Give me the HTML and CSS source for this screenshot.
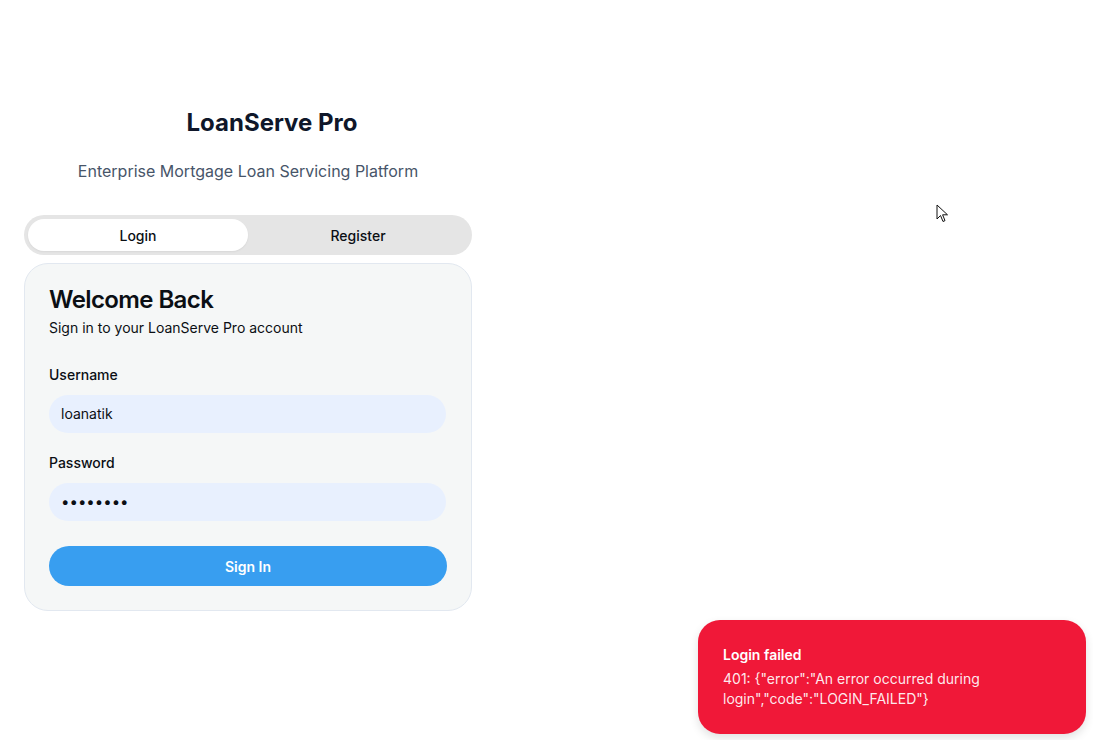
FILE: index.html
```html
<!DOCTYPE html>
<html lang="en">
<head>
<meta charset="utf-8">
<title>LoanServe Pro</title>
<link rel="stylesheet" href="styles.css">
</head>
<body>
<main class="page">
  <header class="brand">
    <h1 class="brand-title">LoanServe Pro</h1>
    <p class="brand-sub">Enterprise Mortgage Loan Servicing Platform</p>
  </header>
  <div class="tabs">
    <button class="tab tab-active">Login</button>
    <button class="tab">Register</button>
  </div>
  <section class="card">
    <h2 class="card-title">Welcome Back</h2>
    <p class="card-sub">Sign in to your LoanServe Pro account</p>
    <div class="field">
      <label class="label">Username</label>
      <div class="input">loanatik</div>
    </div>
    <div class="field">
      <label class="label">Password</label>
      <div class="input input-pass">&#8226;&#8226;&#8226;&#8226;&#8226;&#8226;&#8226;&#8226;</div>
    </div>
    <button class="submit">Sign In</button>
  </section>
</main>
<div class="toast">
  <div class="toast-title">Login failed</div>
  <div class="toast-body">401: {"error":"An error occurred during login","code":"LOGIN_FAILED"}</div>
</div>
<svg class="cursor" width="14" height="20" viewBox="0 0 14 20">
  <path d="M1 1 L1 15 L4.5 11.5 L7 17.5 L9 16.6 L6.6 10.8 L11.5 10.8 Z" fill="#fff" stroke="#111" stroke-width="1" stroke-linejoin="miter"/>
</svg>
</body>
</html>
```
FILE: styles.css
```css
* { box-sizing: border-box; }
html, body { margin: 0; padding: 0; background: #ffffff; }
body {
  font-family: Inter, "Noto Sans", sans-serif;
  color: #0b0f14;
  width: 1093px;
  height: 740px;
  overflow: hidden;
  position: relative;
}
.page {
  width: 448px;
  margin-left: 24px;
  display: flex;
  flex-direction: column;
}
.brand {
  padding-top: 107px;
  text-align: center;
}
.brand-title {
  margin: 0;
  padding-left: 48px;
  font-size: 24px;
  line-height: 32px;
  font-weight: 700;
  color: #0f172a;
}
.brand-sub {
  margin: 20px 0 0;
  font-size: 16px;
  line-height: 24px;
  color: #475569;
}
.tabs {
  margin-top: 32px;
  height: 40px;
  background: #e5e5e5;
  border-radius: 20px;
  padding: 4px;
  display: grid;
  grid-template-columns: 1fr 1fr;
}
.tab {
  border: none;
  background: transparent;
  font-family: inherit;
  font-size: 14px;
  font-weight: 500;
  color: #0b0f14;
  border-radius: 16px;
  padding: 0;
}
.tab-active {
  background: #ffffff;
  box-shadow: 0 1px 2px rgba(0,0,0,0.06);
}
.card {
  margin-top: 8px;
  background: #f5f7f7;
  border: 1px solid #e2e8f0;
  border-radius: 24px;
  padding: 20px 24px 24px;
  display: flex;
  flex-direction: column;
}
.card-title {
  margin: 0;
  font-size: 24px;
  line-height: 32px;
  font-weight: 600;
  letter-spacing: -0.6px;
}
.card-sub {
  margin: 2px 0 0;
  font-size: 14px;
  line-height: 20px;
}
.field {
  display: flex;
  flex-direction: column;
  gap: 10px;
  margin-top: 27px;
}
.field + .field { margin-top: 20px; }
.label {
  font-size: 14px;
  line-height: 20px;
  font-weight: 500;
}
.input {
  height: 38px;
  width: 397px;
  background: #e8f0fe;
  border-radius: 19px;
  padding: 0 12px;
  font-size: 14px;
  line-height: 38px;
}
.input-pass {
  font-size: 15px;
  letter-spacing: 0;
}
.submit {
  margin-top: 25px;
  height: 40px;
  border: none;
  border-radius: 20px;
  background: #389ef0;
  color: #ffffff;
  font-family: inherit;
  font-size: 14px;
  font-weight: 600;
  padding-bottom: 1px;
}
.toast {
  position: absolute;
  left: 698px;
  top: 620px;
  width: 388px;
  height: 114px;
  background: #f01838;
  border-radius: 22px;
  padding: 25px 25px;
  color: #ffffff;
  box-shadow: 0 4px 10px rgba(0,0,0,0.12);
  display: flex;
  flex-direction: column;
  gap: 4px;
}
.toast-title {
  font-size: 14px;
  line-height: 20px;
  font-weight: 600;
}
.toast-body {
  font-size: 14px;
  line-height: 20px;
  color: rgba(255,255,255,0.92);
  padding-right: 80px;
}
.cursor {
  position: absolute;
  left: 936px;
  top: 204px;
}
```
